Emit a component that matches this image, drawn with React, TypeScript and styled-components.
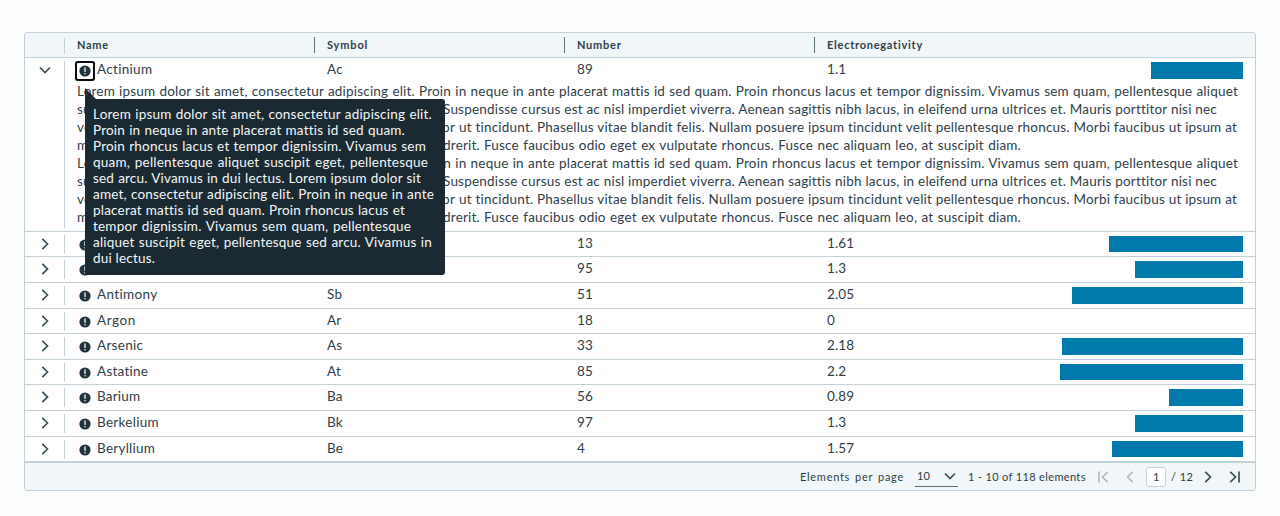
import React from 'react';
import styled, { createGlobalStyle } from 'styled-components';

const Global = createGlobalStyle`
  * { box-sizing: border-box; }
  body { margin: 0; background: #fcfdfd; font-family: Lato, "Open Sans", sans-serif; color: #2f4049; }
`;

const Page = styled.main`
  height: 516px;
  padding: 32px 24px 25px;
`;

const Grid = styled.section`
  position: relative;
  display: flex;
  flex-direction: column;
  height: 459px;
  border: 1px solid #c5d1d8;
  border-radius: 3px;
  background: #fff;
`;

const HeaderRow = styled.div`
  display: grid;
  grid-template-columns: 40px 250px 250px 250px 1fr;
  height: 25px;
  flex: none;
  background: #f1f6f8;
  border-bottom: 1px solid #c5d1d8;
  border-radius: 2px 2px 0 0;
`;

const HeaderCell = styled.div<{ $resizable?: boolean }>`
  display: flex;
  align-items: flex-start;
  justify-content: space-between;
  padding: 4px 0 0 12px;
  &::after {
    content: "";
    width: 1px;
    height: 16px;
    background: ${p => (p.$resizable ? '#5b6f78' : 'transparent')};
  }
`;

const HeaderHandle = styled.div`
  width: 1px;
  height: 16px;
  margin: 5px 0 0 39px;
  background: #c5d1d8;
`;

const Fit = styled.span<{ $w: number; $size?: number; $ls?: number; $bold?: boolean; $lh?: number }>`
  display: block;
  flex: none;
  width: ${p => p.$w}px;
  font-size: ${p => p.$size ?? 13.5}px;
  font-weight: ${p => (p.$bold ? 700 : 400)};
  line-height: ${p => p.$lh ?? 16}px;
  letter-spacing: ${p => p.$ls ?? 0.2}px;
  white-space: nowrap;
  text-align: justify;
  text-align-last: justify;
`;

const Row = styled.div<{ $h: number }>`
  display: grid;
  grid-template-columns: 40px 1fr;
  flex: none;
  height: ${p => p.$h}px;
  border-bottom: 1px solid #c5d1d8;
`;

const CaretCell = styled.div`
  display: flex;
  justify-content: center;
  padding-top: 4px;
  border-right: 1px solid #c5d1d8;
  border-image: linear-gradient(transparent 4px, #c5d1d8 4px, #c5d1d8 calc(100% - 4px), transparent calc(100% - 4px)) 1;
  border-width: 0 1px 0 0;
`;

const Cells = styled.div`
  display: grid;
  grid-template-columns: 250px 250px 250px 1fr;
  height: 25px;
`;

const Cell = styled.div`
  display: flex;
  align-items: flex-start;
  padding: 3px 12px 0;
`;

const NameCell = styled(Cell)`
  gap: 4px;
`;

const InfoButton = styled.span<{ $focus?: boolean }>`
  display: flex;
  align-items: center;
  justify-content: center;
  width: 16px;
  height: 16px;
  margin-top: ${p => (p.$focus ? 2 : 1.5)}px;
  border-radius: 1px;
  box-shadow: ${p => (p.$focus ? '0 0 0 2px #0b0c0d' : 'none')};
`;

const BarCell = styled(Cell)`
  justify-content: space-between;
`;

const Bar = styled.div<{ $w: number; $h: number }>`
  width: ${p => p.$w}px;
  height: ${p => p.$h}px;
  margin-top: 1px;
  background: #0079ad;
`;

const Detail = styled.div`
  margin-top: -1px;
  padding-left: 12px;
`;

const DetailLine = styled.div`
  display: flex;
  gap: 4px;
  height: 18px;
`;

const Tooltip = styled.div`
  position: absolute;
  left: 60px;
  top: 66px;
  width: 360px;
  height: 176px;
  padding: 7px 8px 8px;
  border-radius: 0 3px 3px 3px;
  background: #1b2a32;
  color: #f3f7f8;
  &::before {
    content: "";
    position: absolute;
    left: 0;
    top: -11px;
    border-left: 11px solid #1b2a32;
    border-top: 11px solid transparent;
  }
`;

const Footer = styled.footer`
  display: flex;
  align-items: flex-start;
  flex: 1;
  padding: 6px 0 0 775px;
  background: #f1f6f8;
  border-top: 1px solid #c5d1d8;
  border-radius: 0 0 2px 2px;
`;

const PageSize = styled.div`
  display: flex;
  flex: none;
  justify-content: space-between;
  width: 43px;
  height: 19px;
  margin: -1px 10px 0 11px;
  padding: 0 0 0 2px;
  border-bottom: 1px solid #5b6f78;
`;

const PageInput = styled.div`
  display: flex;
  flex: none;
  justify-content: center;
  width: 20px;
  height: 20px;
  margin: -2px 5px 0 8px;
  padding-top: 1px;
  border: 1px solid #c5d1d8;
  border-radius: 3px;
  background: #fff;
`;

const IconBox = styled.span<{ $gap?: number }>`
  display: flex;
  flex: none;
  margin-left: ${p => p.$gap ?? 0}px;
`;

const Angle = ({ dir, dim, bar }: { dir: 'left' | 'right' | 'down'; dim?: boolean; bar?: boolean }) => {
  const d = dir === 'down' ? 'M3 5.5 8 10.5 13 5.5' : dir === 'right' ? 'M5.3 2.8 10.5 8 5.3 13.2' : 'M10.7 2.8 5.5 8 10.7 13.2';
  const shift = bar ? (dir === 'left' ? 1 : -1) : 0;
  return (
    <svg width="16" height="16" viewBox="0 0 16 16" fill="none" stroke={dim ? '#b2bbc0' : '#3b4f58'} strokeWidth="1.7">
      <path d={d} transform={`translate(${shift} 0)`} />
      {bar && <path d={dir === 'left' ? 'M3 2.5V13.5' : 'M13 2.5V13.5'} />}
    </svg>
  );
};

const Info = () => (
  <svg width="12" height="12" viewBox="0 0 12 12">
    <circle cx="6" cy="6" r="5.6" fill="#21333b" />
    <path d="M6 3V6.4" stroke="#fff" strokeWidth="1.3" strokeLinecap="round" />
    <circle cx="6" cy="8.7" r=".75" fill="#fff" />
  </svg>
);

type Element = [string, number, string, number, string, string, number, number, number, number];
const elements: Element[] = [
  ['Actinium', 55, 'Ac', 16, '89', '1.1', 92, 17, 174, 0.3],
  ['Aluminum', 60, 'Al', 13, '13', '1.61', 134, 16, 25, 0.3],
  ['Americium', 66, 'Am', 20, '95', '1.3', 108, 17, 26, 0.3],
  ['Antimony', 60, 'Sb', 16, '51', '2.05', 171, 17, 26, 0.37],
  ['Argon', 39, 'Ar', 15, '18', '0', 0, 17, 25, 0.55],
  ['Arsenic', 46, 'As', 16, '33', '2.18', 181, 17, 26, 0.3],
  ['Astatine', 51, 'At', 15, '85', '2.2', 183, 16, 25, 0.25],
  ['Barium', 43, 'Ba', 16, '56', '0.89', 74, 17, 26, 0.2],
  ['Berkelium', 62, 'Bk', 16, '97', '1.3', 108, 17, 26, 0.3],
  ['Beryllium', 58, 'Be', 17, '4', '1.57', 131, 16, 25, 0.25],
];

const detail: [string, number, string, number][] = [
  ['Lorem ipsum dolor sit amet, consectetur adipiscing elit.', 338, 'Proin in neque in ante placerat mattis id sed quam. Proin rhoncus lacus et tempor dignissim. Vivamus sem quam, pellentesque aliquet', 819],
  ['suscipit eget, pellentesque sed arcu. Vivamus in dui lectus.', 362, 'Suspendisse cursus est ac nisl imperdiet viverra. Aenean sagittis nibh lacus, in eleifend urna ultrices et. Mauris porttitor nisi nec', 774],
  ['velit fermentum, sed laoreet massa semper. Nunc auctor', 378, 'ut tincidunt. Phasellus vitae blandit felis. Nullam posuere ipsum tincidunt velit pellentesque rhoncus. Morbi faucibus ut ipsum at', 778],
  ['metus hendrerit, vel tristique lacus cursus. Nunc hendrerit.', 403, 'Fusce faucibus odio eget ex vulputate rhoncus. Fusce nec aliquam leo, at suscipit diam.', 537],
];

const tooltip: [string, number][] = [
  ['Lorem ipsum dolor sit amet, consectetur adipiscing elit.', 339],
  ['Proin in neque in ante placerat mattis id sed quam.', 312],
  ['Proin rhoncus lacus et tempor dignissim. Vivamus sem', 333],
  ['quam, pellentesque aliquet suscipit eget, pellentesque', 335],
  ['sed arcu. Vivamus in dui lectus. Lorem ipsum dolor sit', 328],
  ['amet, consectetur adipiscing elit. Proin in neque in ante', 341],
  ['placerat mattis id sed quam. Proin rhoncus lacus et', 312],
  ['tempor dignissim. Vivamus sem quam, pellentesque', 318],
  ['aliquet suscipit eget, pellentesque sed arcu. Vivamus in', 339],
  ['dui lectus.', 62],
];

export default function App() {
  return (
    <Page>
      <Global />
      <Grid>
        <HeaderRow>
          <HeaderHandle />
          <HeaderCell $resizable><Fit $w={32} $size={11} $ls={0.7} $bold>Name</Fit></HeaderCell>
          <HeaderCell $resizable><Fit $w={42} $size={11} $ls={0.85} $bold>Symbol</Fit></HeaderCell>
          <HeaderCell $resizable><Fit $w={45} $size={11} $ls={0.75} $bold>Number</Fit></HeaderCell>
          <HeaderCell><Fit $w={96} $size={11} $ls={0.74} $bold>Electronegativity</Fit></HeaderCell>
        </HeaderRow>
        {elements.map(([name, nw, sym, sw, num, en, bw, bh, h, ls], i) => (
          <Row key={name} $h={h}>
            <CaretCell><Angle dir={i === 0 ? 'down' : 'right'} /></CaretCell>
            <div>
              <Cells>
                <NameCell><InfoButton $focus={i === 0}><Info /></InfoButton><Fit $w={nw} $ls={ls}>{name}</Fit></NameCell>
                <Cell><Fit $w={sw}>{sym}</Fit></Cell>
                <Cell><Fit $w={17}>{num}</Fit></Cell>
                <BarCell><Fit $w={30} $ls={0.1}>{en}</Fit><Bar $w={bw} $h={bh} /></BarCell>
              </Cells>
              {i === 0 && (
                <Detail>
                  {[...detail, ...detail].map(([lead, lw, rest, rw], k) => (
                    <DetailLine key={k}>
                      <Fit $w={lw} $lh={18}>{lead}</Fit>
                      <Fit $w={rw} $lh={18}>{rest}</Fit>
                    </DetailLine>
                  ))}
                </Detail>
              )}
            </div>
          </Row>
        ))}
        <Footer>
          <Fit $w={104} $size={11} $ls={0.72}>Elements per page</Fit>
          <PageSize><Fit $w={12} $size={11}>10</Fit><Angle dir="down" /></PageSize>
          <Fit $w={116} $size={11} $ls={0.35}>1 - 10 of 118 elements</Fit>
          <IconBox $gap={12}><Angle dir="left" dim bar /></IconBox>
          <IconBox $gap={10}><Angle dir="left" dim /></IconBox>
          <PageInput><Fit $w={6} $size={11}>1</Fit></PageInput>
          <Fit $w={22} $size={11}>/ 12</Fit>
          <IconBox $gap={7}><Angle dir="right" /></IconBox>
          <IconBox $gap={10}><Angle dir="right" bar /></IconBox>
        </Footer>
        <Tooltip>
          {tooltip.map(([text, w]) => <Fit key={text} $w={w}>{text}</Fit>)}
        </Tooltip>
      </Grid>
    </Page>
  );
}
